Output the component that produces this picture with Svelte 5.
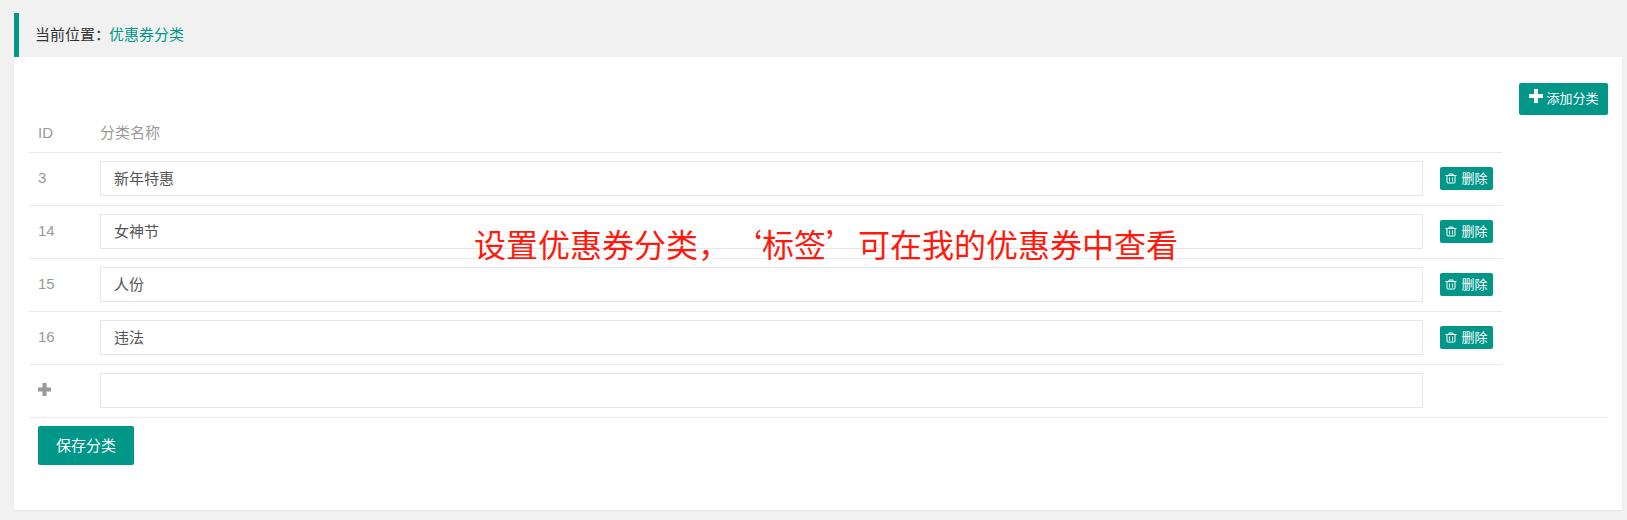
<script>
	const rows = [
		{ id: 3, name: '新年特惠' },
		{ id: 14, name: '女神节' },
		{ id: 15, name: '人份' },
		{ id: 16, name: '违法' }
	];
</script>

<div class="page">
	<div class="crumb">
		<span>当前位置：</span><span class="here">优惠券分类</span>
	</div>
	<div class="panel">
		<p class="note">设置优惠券分类，‘标签’可在我的优惠券中查看</p>
		<div class="toolbar">
			<button class="btn add">
				<svg viewBox="0 0 14 14" width="14" height="14"><path d="M5 0h4v5h5v4H9v5H5V9H0V5h5z" fill="currentColor" /></svg>
				<span>添加分类</span>
			</button>
		</div>
		<div class="table">
			<div class="row head">
				<div class="id">ID</div>
				<div class="name">分类名称</div>
			</div>
			{#each rows as row}
				<div class="row">
					<div class="id">{row.id}</div>
					<div class="name"><input value={row.name} /></div>
					<div class="ops">
						<button class="btn del">
							<svg viewBox="0 0 12 12" width="12" height="12" fill="none" stroke="currentColor" stroke-width="1">
								<path d="M0.5 3.500h11M4 3V2h4v1M2 3.500v6.500q0 1 1 1h6q1 0 1-1V3.500M4.500 5.500v4M7.500 5.500v4" />
							</svg>
							<span>删除</span>
						</button>
					</div>
				</div>
			{/each}
			<div class="row wide">
				<div class="id plus">
					<svg viewBox="0 0 13 13" width="13" height="13"><path d="M4.500 0h4v4.500H13v4H8.500V13h-4V8.500H0v-4h4.500z" fill="currentColor" /></svg>
				</div>
				<div class="name"><input /></div>
			</div>
			<div class="foot">
				<button class="btn save"><span>保存分类</span></button>
			</div>
		</div>
	</div>
</div>

<style>
	:global(body) {
		background: #f1f1f1;
		font-family: 'Liberation Sans', 'Noto Sans CJK SC', sans-serif;
	}
	.page {
		height: 520px;
		box-sizing: border-box;
		padding: 13px 5px 10px 14px;
		overflow: hidden;
	}
	.crumb {
		height: 44px;
		line-height: 43px;
		box-sizing: border-box;
		border-left: 5px solid #009688;
		padding-left: 16px;
		font-size: 15px;
		color: #333;
	}
	.here {
		color: #009688;
		margin-left: -1px;
	}
	.panel {
		position: relative;
		height: 453px;
		box-sizing: border-box;
		background: #fff;
		border-radius: 0 0 2px 2px;
		box-shadow: 0 1px 2px rgba(0, 0, 0, 0.05);
		padding: 26px 14px 0 15px;
	}
	.note {
		position: absolute;
		left: 460px;
		top: 163px;
		margin: 0;
		font-family: 'Noto Sans CJK SC', sans-serif;
		font-size: 32px;
		line-height: 46px;
		color: #ff1a0e;
		white-space: nowrap;
		text-spacing-trim: space-all;
	}
	.toolbar {
		display: flex;
		justify-content: flex-end;
		height: 32px;
	}
	.btn {
		display: inline-flex;
		align-items: center;
		justify-content: center;
		border: 0;
		border-radius: 2px;
		background: #009688;
		color: #fff;
		font-family: inherit;
		padding: 0;
	}
	.add {
		width: 89px;
		height: 32px;
		font-size: 13px;
		gap: 3px;
		padding-left: 1px;
	}
	.add svg {
		margin-bottom: 6px;
	}
	.add span {
		margin-bottom: 4px;
	}
	.table {
		margin-top: 5px;
	}
	.row {
		display: flex;
		width: 1473px;
		height: 53px;
		box-sizing: border-box;
		border-bottom: 1px solid #eaeaea;
		align-items: center;
		padding-bottom: 2px;
		font-size: 15px;
		color: #999;
	}
	.row.head {
		height: 33px;
		padding-bottom: 9px;
	}
	.row.wide {
		width: 100%;
	}
	.id {
		width: 71px;
		padding-left: 9px;
		box-sizing: border-box;
		flex: none;
		margin-bottom: 2px;
	}
	.head .id {
		margin: 2px 0 0;
	}
	.plus {
		display: flex;
		padding-top: 1px;
	}
	input {
		display: block;
		width: 100%;
		height: 35px;
		box-sizing: border-box;
		border: 1px solid #e6e6e6;
		padding: 0 13px 2px;
		font-family: inherit;
		font-size: 15px;
		color: #555;
		outline: none;
	}
	.name {
		width: 1323px;
		flex: none;
	}
	.ops {
		margin-left: 17px;
	}
	.del {
		width: 53px;
		height: 23px;
		font-size: 13px;
		gap: 4px;
	}
	.del span {
		margin-bottom: 2px;
	}
	.foot {
		padding: 8px 0 0 9px;
	}
	.save {
		width: 96px;
		height: 39px;
		font-size: 15px;
	}
	.save span {
		margin-bottom: 3px;
	}
</style>
